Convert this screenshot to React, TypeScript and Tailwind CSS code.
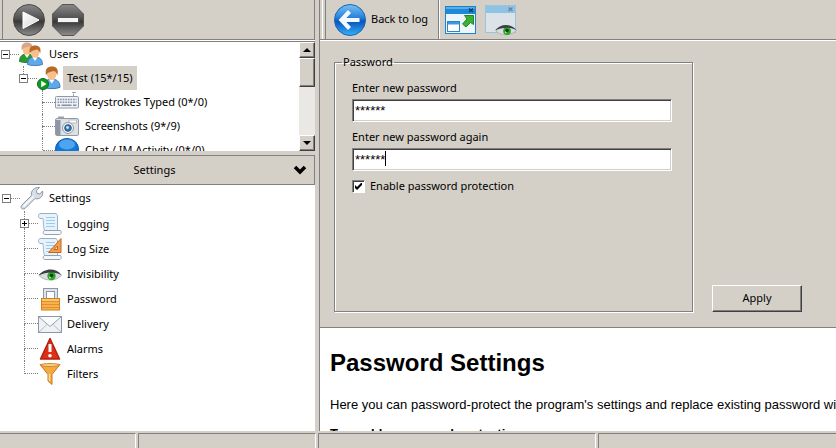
import type { ReactNode } from 'react';

function PlayButtonIcon() {
  return (
    <svg width="32" height="32" viewBox="0 0 32 32">
      <defs>
        <linearGradient id="darkBall" x1="0" y1="0" x2="0" y2="1">
          <stop offset="0" stopColor="#8a8a8a" />
          <stop offset="0.45" stopColor="#505050" />
          <stop offset="0.55" stopColor="#383838" />
          <stop offset="1" stopColor="#8e8e8e" />
        </linearGradient>
        <linearGradient id="whiteFace" x1="0" y1="0" x2="1" y2="1">
          <stop offset="0" stopColor="#ffffff" />
          <stop offset="1" stopColor="#d4d4d4" />
        </linearGradient>
      </defs>
      <circle cx="16" cy="16" r="15.5" fill="url(#darkBall)" stroke="#4a4a4a" />
      <path d="M10 8 L26 16 L10 24.5 Z" fill="url(#whiteFace)" stroke="#fff" strokeLinejoin="round" />
    </svg>
  );
}

function StopButtonIcon() {
  return (
    <svg width="32" height="32" viewBox="0 0 32 32">
      <path d="M10 0.5 H22 L31.5 10 V22 L22 31.5 H10 L0.5 22 V10 Z" fill="url(#darkBall)" stroke="#555" />
      <rect x="5.5" y="13.5" width="21" height="5" rx="1" fill="#f4f4f4" stroke="#333" strokeWidth="0.7" />
    </svg>
  );
}

function BackIcon() {
  return (
    <svg width="32" height="32" viewBox="0 0 32 32">
      <defs>
        <linearGradient id="blueBall" x1="0" y1="0" x2="0" y2="1">
          <stop offset="0" stopColor="#7cc0f4" />
          <stop offset="0.4" stopColor="#2b86dc" />
          <stop offset="0.55" stopColor="#0a55bc" />
          <stop offset="1" stopColor="#35b2f8" />
        </linearGradient>
      </defs>
      <circle cx="16" cy="16" r="15.5" fill="url(#blueBall)" stroke="#1a63b8" />
      <path d="M15.5 7.5 L7.5 16 L15.5 24.5 M8 16 H25.5" fill="none" stroke="#f4f9ff" strokeWidth="4.2" />
    </svg>
  );
}

function PopOutIcon() {
  return (
    <svg width="32" height="30" viewBox="0 0 32 30">
      <rect x="0.5" y="1.5" width="30" height="27" fill="#eef6fc" stroke="#1d82cc" />
      <rect x="1" y="2" width="29" height="7" fill="#1c8ad8" />
      <rect x="1" y="2" width="29" height="2" fill="#55b0ea" />
      <path d="M24 3.5 l4 3.5 M28 3.5 l-4 3.5" stroke="#123a66" strokeWidth="1.5" />
      <rect x="2.5" y="16.5" width="12" height="10" fill="#fff" stroke="#2b86c8" />
      <rect x="3" y="17" width="11" height="2.5" fill="#3c9be0" />
      <path d="M19.5 10.5 H28.5 V19.5 L25.5 17.5 L21 22 L17.5 19 L22 14 Z" fill="#3cb034" stroke="#1f8a24" />
    </svg>
  );
}

function Eye() {
  return (
    <g>
      <path d="M1 7 C5 1 17 0 23 6 C19 12 7 13 1 7 Z" fill="#d9dde0" stroke="#a3a8ad" strokeWidth="0.8" />
      <circle cx="13" cy="7" r="4.2" fill="#2fa428" />
      <circle cx="13" cy="6.5" r="1.8" fill="#0b3a10" />
      <circle cx="11.5" cy="8.5" r="0.9" fill="#a8e89a" />
      <path d="M0 6.5 C5 -0.5 17 -2 23 6 C17 2.5 8 2.5 0 6.5 Z" fill="#3a3f42" />
    </g>
  );
}

function PreviewIcon() {
  return (
    <svg width="32" height="32" viewBox="0 0 32 32">
      <rect x="0.5" y="1.5" width="30" height="27" fill="#dbe2e8" stroke="#9cc3dd" />
      <rect x="1" y="2" width="29" height="7" fill="#8fc3e4" />
      <path d="M23.5 3.5 l4 3.5 M27.5 3.5 l-4 3.5" stroke="#68869c" strokeWidth="1.5" />
      <g transform="translate(10 20.5) scale(0.93)">
        <Eye />
      </g>
    </svg>
  );
}

function PersonShape({ hair, shirt, edge }: { hair: string; shirt: string; edge: string }) {
  return (
    <g>
      <path d="M0 19 C0 13 3.5 11.5 7.5 11.5 C11.5 11.5 15 13 15 19 C11 20.5 4 20.5 0 19 Z" fill={shirt} stroke={edge} strokeWidth="0.8" />
      <path d="M4.8 11.5 L7.5 15.5 L10.2 11.5 Z" fill="#fff" />
      <ellipse cx="7.5" cy="7" rx="4.3" ry="5.3" fill="#f8c088" />
      <path d="M2.3 8 C1 2 4 0 7.5 0 C11.5 0 14 2 12.7 8 C12 6 11 4.5 9.5 4 C7 5 4 4.5 2.3 8 Z" fill={hair} />
    </g>
  );
}

function UsersIcon() {
  return (
    <svg width="24" height="24" viewBox="0 0 24 24">
      <g transform="translate(0.5 0.5)">
        <PersonShape hair="#d8a58a" shirt="#2c9a30" edge="#1c7020" />
      </g>
      <g transform="translate(8.5 3.5)">
        <PersonShape hair="#b8692a" shirt="#5fa8ea" edge="#2d6fb8" />
      </g>
    </svg>
  );
}

function UserIcon() {
  return (
    <svg width="24" height="24" viewBox="0 0 24 24">
      <g transform="translate(6.5 0.5) scale(1.1)">
        <PersonShape hair="#b8692a" shirt="#5fa8ea" edge="#2d6fb8" />
      </g>
      <circle cx="6" cy="18" r="5.5" fill="#139a22" stroke="#0b6a14" />
      <path d="M4.2 14.8 L9.5 18 L4.2 21.2 Z" fill="#fff" />
    </svg>
  );
}

function KeyboardIcon() {
  return (
    <svg width="24" height="24" viewBox="0 0 24 24">
      <path d="M18.5 7 V3.5 M17 2.5 H21" fill="none" stroke="#98a4b0" />
      <rect x="0.5" y="6.5" width="23" height="11.5" rx="1" fill="#eef1f5" stroke="#8e9aa8" />
      <path d="M2.5 9.5 H21.5 M2.5 12.2 H21.5" stroke="#8692a2" strokeWidth="1.6" strokeDasharray="1.6 1" />
      <path d="M2.5 15.2 H5 M6.5 15.2 H16.5 M18 15.2 H21.5" stroke="#8692a2" strokeWidth="1.4" />
    </svg>
  );
}

function CameraIcon() {
  return (
    <svg width="24" height="24" viewBox="0 0 24 24">
      <path d="M3 5 V2.5 H9 V5 Z" fill="#9aa3ad" />
      <rect x="0.5" y="4.5" width="23" height="17" rx="1.5" fill="#dde1e6" stroke="#929ba6" />
      <rect x="1" y="6" width="4.5" height="15" fill="#8d97a3" />
      <rect x="14" y="6" width="7.5" height="3" fill="#fafafa" stroke="#a2abb5" strokeWidth="0.7" />
      <circle cx="13" cy="14" r="5.5" fill="#f2f4f6" stroke="#929ba6" />
      <circle cx="13" cy="14" r="3.3" fill="#2d78c4" stroke="#35506e" />
      <circle cx="12.5" cy="13.5" r="1.4" fill="#bfe4ff" />
    </svg>
  );
}

function ChatIcon() {
  return (
    <svg width="24" height="24" viewBox="0 0 24 24">
      <ellipse cx="12" cy="11" rx="11.5" ry="10.5" fill="#1277dc" stroke="#0c5cb4" />
      <ellipse cx="12" cy="6.5" rx="8" ry="5" fill="#63b4f4" opacity="0.75" />
    </svg>
  );
}

function WrenchIcon() {
  return (
    <svg width="24" height="24" viewBox="0 0 24 24">
      <path
        d="M1.5 19.5 L11.5 9.5 C10.5 5 14 1 19.5 1.5 L16.5 4.5 L17 7.5 L20 8 L22.5 5 C24 10.5 19 14 15 12.5 L5 22.5 C2.5 24 0 22 1.5 19.5 Z"
        fill="#d9dfe6"
        stroke="#8b96a3"
      />
      <path d="M3.5 20.5 L13.5 10.5" stroke="#fff" strokeWidth="1.5" />
    </svg>
  );
}

function Scroll() {
  return (
    <g>
      <path d="M2 1.5 H17 C19 1.5 19.5 3 19.5 5 V19 H7 C5 17 5.5 8 5 6.5 H2 C0 5.5 0 2.5 2 1.5 Z" fill="#e6f3fc" stroke="#9db0c0" />
      <path d="M7 18.5 H22.5 C23.5 20 23.5 21.5 22 22.5 H7 C4.5 22 4.5 19 7 18.5 Z" fill="#f4f8fb" stroke="#92a2b2" />
      <path d="M8 5.5 H17 M8 8.5 H17 M8 11.5 H17 M8 14.5 H17" stroke="#9ccbee" />
    </g>
  );
}

function ScrollIcon() {
  return (
    <svg width="24" height="24" viewBox="0 0 24 24">
      <Scroll />
    </svg>
  );
}

function LogSizeIcon() {
  return (
    <svg width="24" height="24" viewBox="0 0 24 24">
      <Scroll />
      <path d="M23 1.5 V15.5 H10.5 Z M19.5 9 V12.5 H16 Z" fill="#f0a04a" stroke="#c8651a" fillRule="evenodd" />
    </svg>
  );
}

function EyeIcon() {
  return (
    <svg width="24" height="24" viewBox="0 0 24 24">
      <g transform="translate(0.5 7)">
        <Eye />
      </g>
    </svg>
  );
}

function PadlockIcon() {
  return (
    <svg width="24" height="24" viewBox="0 0 24 24">
      <path d="M7 12 V3 H18 V12" fill="none" stroke="#8a96a2" strokeWidth="4" />
      <path d="M7 12 V3 H18 V12" fill="none" stroke="#dfe5ea" strokeWidth="2" />
      <rect x="3.5" y="11.5" width="18" height="11.5" fill="#f7b24a" stroke="#cf8120" />
      <path d="M4 14.5 H21 M4 17.5 H21 M4 20.5 H21" stroke="#e08f2c" />
      <path d="M4 13 H21" stroke="#fddc98" />
    </svg>
  );
}

function EnvelopeIcon() {
  return (
    <svg width="24" height="24" viewBox="0 0 24 24">
      <rect x="0.5" y="4.5" width="23" height="16" fill="#eff2f5" stroke="#8c98a4" />
      <path d="M1 20 L9.5 12 M23 20 L14.5 12" stroke="#b4bec8" />
      <path d="M1 5 L12 14.5 L23 5" fill="#fafbfc" stroke="#98a4b0" />
    </svg>
  );
}

function AlarmIcon() {
  return (
    <svg width="24" height="24" viewBox="0 0 24 24">
      <path d="M12 1.5 L21.5 22 H2.5 Z" fill="#dd3018" stroke="#b42010" strokeWidth="1.5" strokeLinejoin="round" />
      <path d="M12 7 V15" stroke="#fff" strokeWidth="3" />
      <circle cx="12" cy="18.7" r="1.8" fill="#fff" />
    </svg>
  );
}

function FunnelIcon() {
  return (
    <svg width="24" height="24" viewBox="0 0 24 24">
      <path d="M2 2.5 L10 12.5 V19 L14 22.5 V12.5 L22 2.5 Z" fill="#f6a93c" stroke="#c97a1c" />
      <ellipse cx="12" cy="3" rx="9.5" ry="1.5" fill="#fbd08a" stroke="#d08a30" />
      <path d="M11.5 12 V19" stroke="#fde0a8" strokeWidth="1.5" />
    </svg>
  );
}

function Expander({ open }: { open: boolean }) {
  return (
    <button
      type="button"
      aria-label={open ? 'Collapse' : 'Expand'}
      className="flex h-[9px] w-[9px] shrink-0 items-center justify-center border border-[#808080] bg-white"
    >
      <svg width="5" height="5" viewBox="0 0 5 5">
        <path d={open ? 'M0 2.5 H5' : 'M0 2.5 H5 M2.5 0 V5'} stroke="#000" />
      </svg>
    </button>
  );
}

function Dots({ className }: { className: string }) {
  return <span className={`shrink-0 border-t border-dotted border-[#808080] ${className}`} />;
}

// vertical connector shared by all children of a node
function Branch({ last, open }: { last?: boolean; open?: boolean }) {
  return (
    <span className="flex w-[13px] shrink-0 flex-col self-stretch">
      <span className="ml-1 flex-1 border-l border-dotted border-[#808080]" />
      {open !== undefined && <Expander open={open} />}
      <span className={`ml-1 flex-1 ${last ? '' : 'border-l border-dotted border-[#808080]'}`} />
    </span>
  );
}

function Label({ selected, children }: { selected?: boolean; children: ReactNode }) {
  return (
    <span className={`px-1 py-[3px] leading-[18px] whitespace-nowrap ${selected ? 'bg-[#d4d0c8]' : ''}`}>{children}</span>
  );
}

const settingsItems = [
  { label: 'Logging', icon: <ScrollIcon />, open: false },
  { label: 'Log Size', icon: <LogSizeIcon /> },
  { label: 'Invisibility', icon: <EyeIcon /> },
  { label: 'Password', icon: <PadlockIcon /> },
  { label: 'Delivery', icon: <EnvelopeIcon /> },
  { label: 'Alarms', icon: <AlarmIcon /> },
  { label: 'Filters', icon: <FunnelIcon /> },
];

const logItems = [
  { label: 'Keystrokes Typed (0*/0)', icon: <KeyboardIcon /> },
  { label: 'Screenshots (9*/9)', icon: <CameraIcon /> },
  { label: 'Chat / IM Activity (0*/0)', icon: <ChatIcon /> },
];

function ScrollButton({ up }: { up?: boolean }) {
  return (
    <button
      type="button"
      aria-label={up ? 'Scroll up' : 'Scroll down'}
      className="flex h-4 w-4 shrink-0 items-center justify-center border border-t-white border-l-white border-r-[#404040] border-b-[#404040] bg-[#d4d0c8] shadow-[inset_-1px_-1px_0_#808080]"
    >
      <svg width="8" height="4" viewBox="0 0 8 4">
        <path d={up ? 'M0 4 L4 0 L8 4 Z' : 'M0 0 L4 4 L8 0 Z'} fill="#000" />
      </svg>
    </button>
  );
}

function UsersTree() {
  return (
    <div className="flex h-[110px] border-t border-[#808080] bg-white">
      <ul className="min-w-0 flex-1 overflow-hidden">
        <li className="flex h-6 items-center pl-px">
          <Expander open />
          <Dots className="w-[9px]" />
          <UsersIcon />
          <span className="ml-[2px] flex">
            <Label>Users</Label>
          </span>
        </li>
        <li className="flex h-6 items-center pl-[19px]">
          <Branch open last />
          <Dots className="-ml-1 w-[9px]" />
          <UserIcon />
          <span className="ml-[2px] flex">
            <Label selected>Test (15*/15)</Label>
          </span>
        </li>
        {logItems.map((item, i) => (
          <li key={item.label} className="flex h-6 items-center pl-[38px]">
            <Branch last={i === logItems.length - 1} />
            <Dots className="-ml-2 w-3" />
            {item.icon}
            <span className="ml-[2px] flex">
              <Label>{item.label}</Label>
            </span>
          </li>
        ))}
      </ul>
      <div className="flex w-4 flex-col bg-[#eae8e4]">
        <ScrollButton up />
        <div className="h-[29px] border border-t-white border-l-white border-r-[#404040] border-b-[#404040] bg-[#d4d0c8] shadow-[inset_-1px_-1px_0_#808080]" />
        <div className="flex-1" />
        <ScrollButton />
      </div>
    </div>
  );
}

function SettingsTree() {
  return (
    <ul className="min-h-0 flex-1 overflow-hidden bg-white">
      <li className="flex h-[26px] items-center pl-[2px]">
        <Expander open />
        <Dots className="w-[9px]" />
        <WrenchIcon />
        <span className="ml-px flex">
          <Label>Settings</Label>
        </span>
      </li>
      {settingsItems.map((item, i) => (
        <li key={item.label} className="flex h-[25px] items-center pl-5">
          <Branch open={item.open} last={i === settingsItems.length - 1} />
          <Dots className={item.open === undefined ? '-ml-2 w-[13px]' : '-ml-1 w-[9px]'} />
          {item.icon}
          <span className="ml-px flex">
            <Label>{item.label}</Label>
          </span>
        </li>
      ))}
    </ul>
  );
}

function PasswordField({ id, label, caret }: { id: string; label: string; caret?: boolean }) {
  return (
    <div className="flex flex-col">
      <label htmlFor={id} className="mb-[2px] leading-[18px]">
        {label}
      </label>
      <div className="relative">
        <input
          id={id}
          type="text"
          defaultValue="******"
          className="block h-[23px] w-full border border-t-[#808080] border-l-[#808080] border-r-white border-b-white bg-white px-[2px] font-['Liberation_Sans',Arial,sans-serif] text-[13px] shadow-[inset_1px_1px_0_#404040,inset_-1px_-1px_0_#d4d0c8] outline-none"
        />
        {caret && <span className="absolute top-[3px] left-[33px] h-[15px] w-px bg-black" />}
      </div>
    </div>
  );
}

function PasswordForm() {
  return (
    <form className="flex h-[286px] items-end gap-[19px] pt-3 pr-8 pb-[15px] pl-[14px]">
      <fieldset className="h-full w-[359px] border border-[#808080] px-[17px] shadow-[1px_1px_0_#fff,inset_1px_1px_0_#fff]">
        <legend className="-ml-[10px] px-px leading-[18px]">Password</legend>
        <div className="mt-2 flex flex-col gap-[6px] pr-[3px]">
          <PasswordField id="password" label="Enter new password" />
          <PasswordField id="password-again" label="Enter new password again" caret />
          <label className="flex items-center gap-[5px] leading-[18px]">
            <span className="relative flex">
              <input
                type="checkbox"
                defaultChecked
                className="peer h-[13px] w-[13px] appearance-none border border-t-[#808080] border-l-[#808080] border-r-white border-b-white bg-white shadow-[inset_1px_1px_0_#404040]"
              />
              <svg
                width="7"
                height="7"
                viewBox="0 0 7 7"
                className="pointer-events-none absolute top-[3px] left-[3px] hidden peer-checked:block"
              >
                <path d="M0 2 L2 4 L7 -1 V2 L2 7 L0 5 Z" fill="#000" />
              </svg>
            </span>
            Enable password protection
          </label>
        </div>
      </fieldset>
      <button
        type="button"
        className="h-[27px] w-[90px] border border-t-white border-l-white border-r-[#404040] border-b-[#404040] shadow-[inset_-1px_-1px_0_#808080]"
      >
        Apply
      </button>
    </form>
  );
}

function Toolbar({ children }: { children: ReactNode }) {
  return <div className="flex h-10 shrink-0 border-b border-[#808080]">{children}</div>;
}

export default function App() {
  return (
    <div className="flex h-screen flex-col overflow-hidden bg-[#d4d0c8] font-['Noto_Sans',sans-serif] text-[11px] text-black">
      <div className="flex min-h-0 flex-1 gap-1">
        <aside className="flex w-[315px] shrink-0 flex-col">
          <div className="mb-px flex h-10 shrink-0 items-center gap-[7px] border-r border-b border-[#808080] pl-[2px] shadow-[0_1px_0_#fff]">
            <span className="mr-[3px] w-px self-stretch bg-[#808080]" />
            <button type="button" aria-label="Start">
              <PlayButtonIcon />
            </button>
            <button type="button" aria-label="Stop">
              <StopButtonIcon />
            </button>
          </div>
          <UsersTree />
          <button
            type="button"
            className="mt-1 flex h-[30px] shrink-0 items-center border-t border-r border-b border-[#808080] pr-[7px]"
          >
            <span className="flex-1 pl-4 text-center">Settings</span>
            <svg width="14" height="10" viewBox="0 0 14 10">
              <path d="M2 2 L7 7 L12 2" fill="none" stroke="#000" strokeWidth="3.5" />
            </svg>
          </button>
          <SettingsTree />
        </aside>
        <main className="flex min-w-0 flex-1 flex-col border-l border-[#808080]">
          <Toolbar>
            <span className="ml-[2px] w-1 border-x border-l-white border-r-[#808080]" />
            <button type="button" className="ml-2 flex items-center gap-[5px] border-r border-[#808080] pr-[10px]">
              <BackIcon />
              Back to log
            </button>
            <div className="flex items-center gap-2 border-l border-white pl-[5px]">
              <button type="button" aria-label="Open in window">
                <PopOutIcon />
              </button>
              <button type="button" aria-label="Preview">
                <PreviewIcon />
              </button>
            </div>
          </Toolbar>
          <div className="border-t border-white">
            <PasswordForm />
          </div>
          <article className="min-h-0 flex-1 overflow-hidden border-t border-[#808080] bg-white pt-5 pl-[10px] font-['Liberation_Sans',Arial,sans-serif] text-[13px]">
            <h1 className="text-[24px] leading-[30px] font-bold">Password Settings</h1>
            <p className="mt-[18px] leading-[18px] whitespace-nowrap">
              Here you can password-protect the program's settings and replace existing password with a new one.
            </p>
            <p className="mt-[11px] leading-[18px] font-bold">To enable password protection:</p>
          </article>
        </main>
      </div>
      <footer className="mt-[2px] flex h-[15px] shrink-0 gap-[2px]">
        <div className="w-[136px] border-t border-r border-t-[#808080] border-r-white" />
        <div className="w-[178px] border-t border-l border-r border-t-[#808080] border-l-[#808080] border-r-white" />
        <div className="w-[278px] border-t border-l border-r border-t-[#808080] border-l-[#808080] border-r-white" />
        <div className="flex-1 border-t border-l border-[#808080]" />
      </footer>
    </div>
  );
}
